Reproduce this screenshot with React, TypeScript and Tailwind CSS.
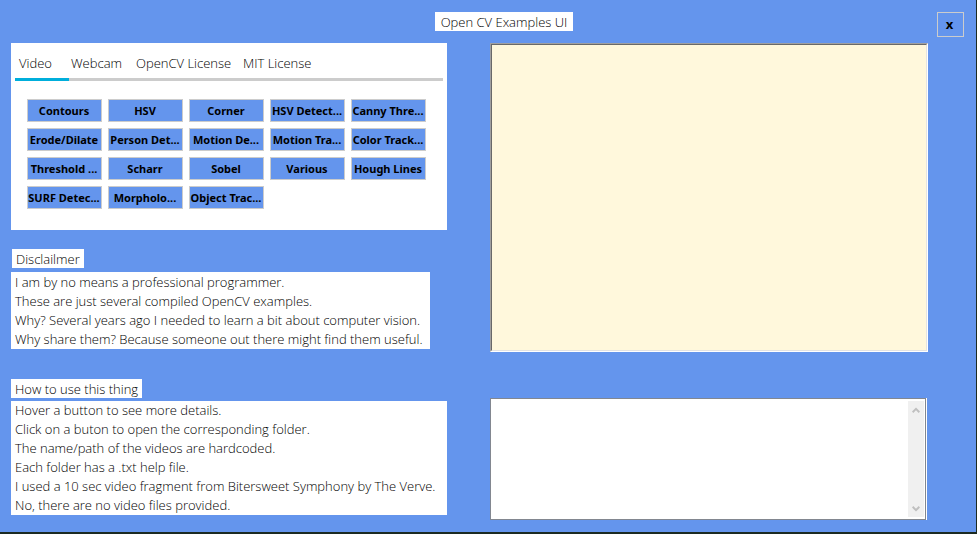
import { useState } from "react";
import clsx from "clsx";

const tabs = [
  { name: "Video", box: "w-[54px] pl-1" },
  { name: "Webcam", box: "w-[63px] pl-0.5" },
  { name: "OpenCV License", box: "w-[107px] pl-1" },
  { name: "MIT License", box: "w-[80px] pl-1" },
];

const examples = [
  "Contours", "HSV", "Corner", "HSV Detect...", "Canny Thre...",
  "Erode/Dilate", "Person Det...", "Motion De...", "Motion Tra...", "Color Track...",
  "Threshold ...", "Scharr", "Sobel", "Various", "Hough Lines",
  "SURF Detec...", "Morpholo...", "Object Trac...",
];

const disclaimer = [
  "I am by no means a professional programmer.",
  "These are just several compiled OpenCV examples.",
  "Why? Several years ago I needed to learn a bit about computer vision.",
  "Why share them? Because someone out there might find them useful.",
];

const howTo = [
  "Hover a button to see more details.",
  "Click on a buton to open the corresponding folder.",
  "The name/path of the videos are hardcoded.",
  "Each folder has a .txt help file.",
  "I used a 10 sec video fragment from Bitersweet Symphony by The Verve.",
  "No, there are no video files provided.",
];

function Lines({ items }: { items: string[] }) {
  return (
    <>
      {items.map((line) => (
        <p key={line} className="whitespace-nowrap">{line}</p>
      ))}
    </>
  );
}

function Chevron({ down = false }: { down?: boolean }) {
  return (
    <svg viewBox="0 0 8 6" className={clsx("h-1.5 w-2", down && "rotate-180")} aria-hidden="true">
      <path d="M0.6 5.2 4 1.8 7.4 5.2" fill="none" stroke="#bfbfbf" strokeWidth="2" />
    </svg>
  );
}

export default function App() {
  const [active, setActive] = useState("Video");
  return (
    <div className="min-h-screen bg-[#1c2a22] pr-px pb-0.5 font-['Open_Sans','Noto_Sans',sans-serif] text-[13px] leading-[19px] font-light text-black">
      <div className="flex min-h-[calc(100vh-2px)] flex-col gap-1.5 bg-[#6495ed] pt-3 pb-3">
        <header className="grid grid-cols-[1fr_auto_1fr] items-start pr-3 pl-11">
          <h1 className="col-start-2 h-[19px] bg-white px-1.5 leading-[21px]">Open CV Examples UI</h1>
          <button type="button" aria-label="Close" className="h-[25px] w-[27px] justify-self-end border border-[#ccc] pr-0.5 text-[13px] leading-none font-bold">
            x
          </button>
        </header>

        <main className="grid grid-cols-[436fr_438fr] items-start gap-[43px] pr-12 pl-[11px]">
          <div className="min-w-0">
            <section className="bg-white px-1 pt-[11px] pb-[21px]">
              <div role="tablist" className="flex border-b-3 border-[#ccc]">
                {tabs.map(({ name, box }) => (
                  <button
                    key={name}
                    type="button"
                    role="tab"
                    aria-selected={active === name}
                    onClick={() => setActive(name)}
                    className={clsx(
                      "-mb-[3px] border-b-3 pb-[5px] text-left whitespace-nowrap",
                      box,
                      active === name ? "border-[#00aedb]" : "border-transparent",
                    )}
                  >
                    {name}
                  </button>
                ))}
              </div>
              <div className="grid grid-cols-[repeat(5,75px)] gap-1.5 pt-[18px] pl-3">
                {examples.map((name) => (
                  <button key={name} type="button" className="flex h-[23px] items-center justify-center border border-[#ccc] bg-[#6495ed] pr-px text-[11px] leading-none font-bold whitespace-nowrap font-['Noto_Sans','Open_Sans',sans-serif]">
                    {name}
                  </button>
                ))}
              </div>
            </section>

            <section className="pt-[19px]">
              <h2 className="ml-px h-[19px] w-fit bg-white px-1 leading-[21px]">Disclailmer</h2>
              <div className="mt-1 w-fit bg-white pt-px pr-[7px] pl-1">
                <Lines items={disclaimer} />
              </div>
            </section>

            <section className="pt-[30px]">
              <h2 className="h-[19px] w-fit bg-white px-1 leading-[21px]">How to use this thing</h2>
              <div className="mt-[3px] bg-white px-1">
                <Lines items={howTo} />
              </div>
            </section>
          </div>

          <div className="flex min-w-0 flex-col gap-[46px]">
            <div role="img" aria-label="Preview" className="border border-t-[#a0a0a0] border-r-white border-b-white border-l-[#a0a0a0]">
              <div className="h-[307px] border border-t-[#696969] border-r-[#e3e3e3] border-b-[#e3e3e3] border-l-[#696969] bg-[#fff8dc]" />
            </div>
            <div className="mr-px flex h-[122px] border-r border-white">
              <div className="flex flex-1 border border-[#828790] bg-white py-0.5 pr-px">
                <textarea aria-label="Details" className="flex-1 resize-none overflow-hidden px-1 outline-none" />
                <div className="flex w-4 flex-col items-center justify-between bg-[#f0f0f0] pt-1.5 pb-[5px]">
                  <Chevron />
                  <Chevron down />
                </div>
              </div>
            </div>
          </div>
        </main>
      </div>
    </div>
  );
}
